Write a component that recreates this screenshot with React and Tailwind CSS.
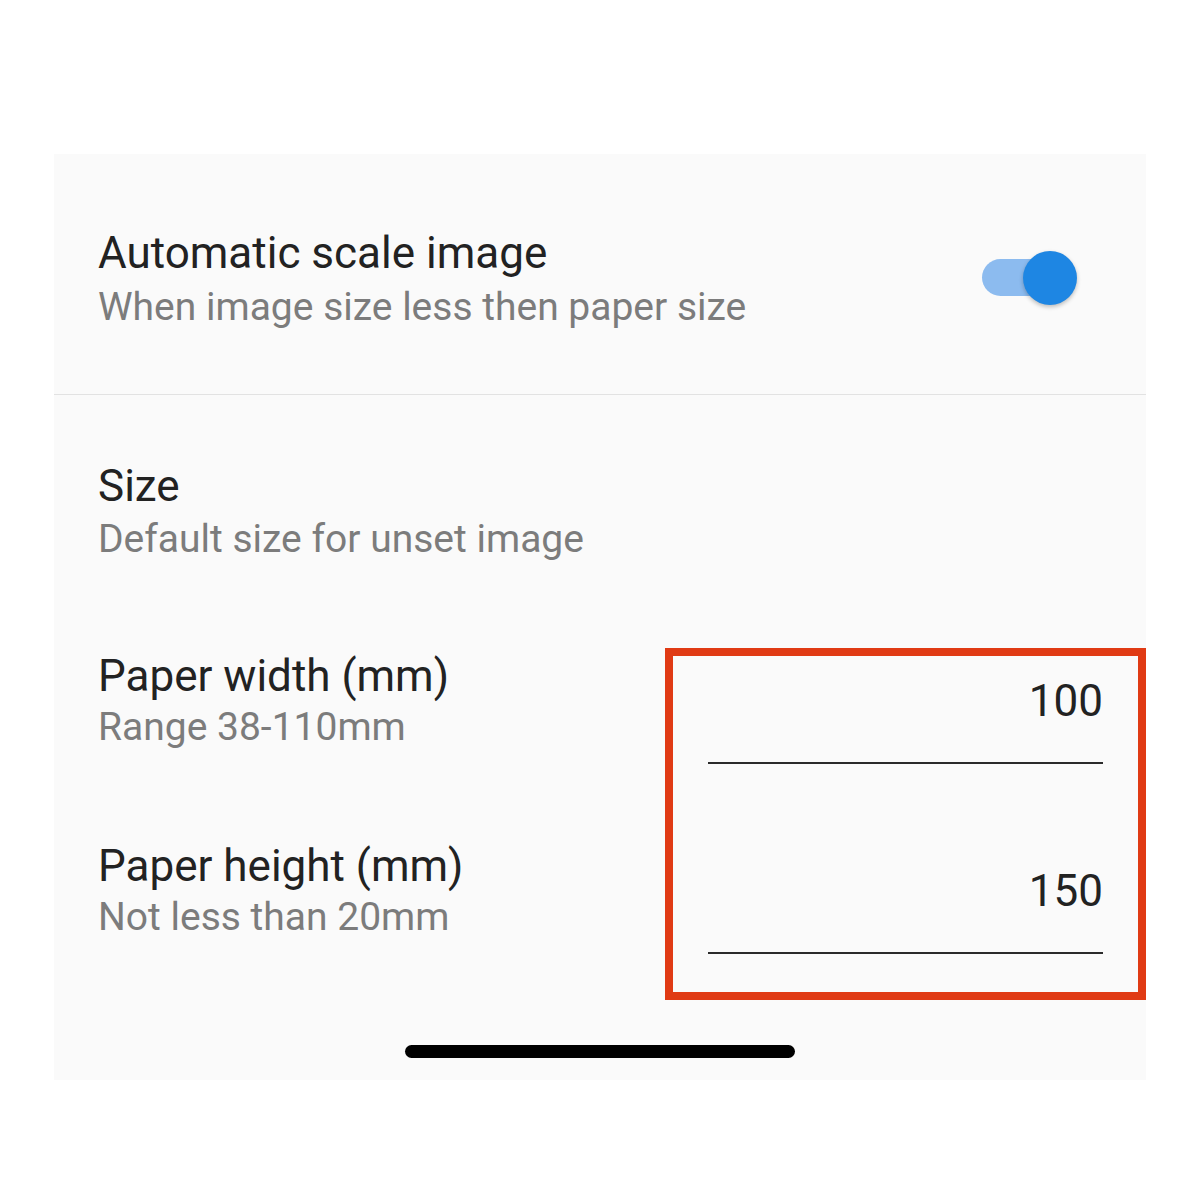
export default function App() {
  return (
    <div
      className="w-[1200px] h-[1200px] bg-white pt-[154px] px-[54px]"
      style={{ fontFamily: "Roboto, 'Noto Sans', sans-serif" }}
    >
      <div className="h-[926px] bg-[#fafafa] flex flex-col">
        {/* Automatic scale row */}
        <div className="flex justify-between items-start border-b border-[#e2e2e2] pl-[44px] pr-[69px] h-[241px]">
          <div className="pt-[73px]">
            <div className="text-[44px] leading-[52px] text-[#222222]">
              Automatic scale image
            </div>
            <div className="mt-[5px] text-[39px] leading-[46px] text-[#7c7c7c]">
              When image size less then paper size
            </div>
          </div>
          <Toggle />
        </div>

        {/* Size section */}
        <div className="pl-[44px] pt-[65px]">
          <div className="text-[44px] leading-[52px] text-[#222222]">Size</div>
          <div className="mt-[4px] text-[39px] leading-[46px] text-[#7c7c7c]">
            Default size for unset image
          </div>
        </div>

        <div className="flex mt-[86px]">
          <div className="flex-1 pl-[44px] pt-[2px]">
            <Label title="Paper width (mm)" sub="Range 38-110mm" />
            <div className="mt-[90px]">
              <Label title="Paper height (mm)" sub="Not less than 20mm" />
            </div>
          </div>
          <div className="w-[481px] h-[352px] border-[8px] border-[#e03a14] px-[35px] pt-[19px]">
            <Field value="100" />
            <div className="mt-[101px]">
              <Field value="150" />
            </div>
          </div>
        </div>

        <div className="mt-[45px] flex justify-center">
          <div className="w-[390px] h-[13px] rounded-full bg-black" />
        </div>
      </div>
    </div>
  );
}

function Label({ title, sub }) {
  return (
    <div>
      <div className="text-[44px] leading-[52px] text-[#222222]">{title}</div>
      <div className="mt-[2px] text-[39px] leading-[46px] text-[#7c7c7c]">
        {sub}
      </div>
    </div>
  );
}

function Field({ value }) {
  return (
    <div>
      <div className="text-right text-[44px] leading-[52px] text-[#222222]">
        {value}
      </div>
      <div className="mt-[35px] h-[2px] bg-[#2a2a2a]" />
    </div>
  );
}

function Toggle() {
  return (
    <div className="relative mt-[97px] w-[95px] h-[54px]">
      <div className="absolute left-0 top-[8px] w-[80px] h-[37px] rounded-full bg-[#8cbbef]" />
      <div className="absolute right-0 top-0 w-[54px] h-[54px] rounded-full bg-[#1e86e3] shadow-[0_2px_4px_rgba(0,0,0,0.25)]" />
    </div>
  );
}
